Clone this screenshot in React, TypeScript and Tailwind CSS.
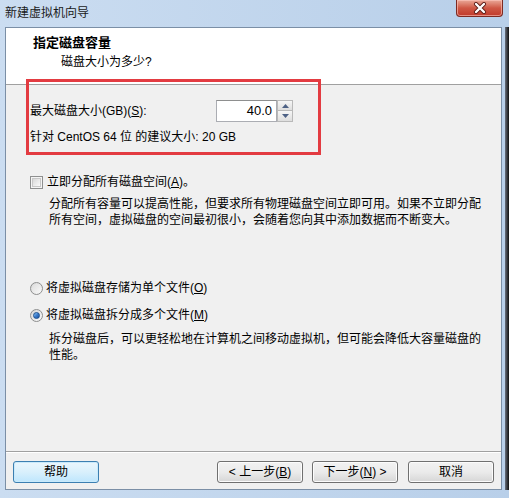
import React from "react";

function Checkbox() {
  return (
    <div className="flex h-[13px] w-[13px] items-center justify-center border border-[#8e8f8f] bg-[#f4f4f4]">
      <div className="h-[9px] w-[9px] border border-[#c8c8c8] bg-gradient-to-br from-[#d8d8d8] to-[#fafafa]" />
    </div>
  );
}

function Radio({ checked }: { checked?: boolean }) {
  return (
    <div className="flex h-[13px] w-[13px] items-center justify-center rounded-full border border-[#8e8f8f] bg-gradient-to-br from-[#d6d6d6] to-[#fbfbfb]">
      {checked ? (
        <div className="h-[7px] w-[7px] rounded-full border border-[#1b4f8f] bg-gradient-to-br from-[#8fc8f4] via-[#3a7ccd] to-[#1d4f9a]" />
      ) : (
        <div className="h-[9px] w-[9px] rounded-full bg-gradient-to-br from-[#dedede] to-[#f8f8f8]" />
      )}
    </div>
  );
}

function Btn({ children, primary }: { children: React.ReactNode; primary?: boolean }) {
  return (
    <div
      className={
        primary
          ? "flex h-[22px] w-[86px] items-center justify-center rounded-[3px] border border-[#3c7fb1] bg-gradient-to-b from-[#eaf6fd] via-[#d9f0fc] to-[#bee6fd] shadow-[inset_0_0_0_1px_#c9eafb]"
          : "flex h-[22px] w-[86px] items-center justify-center rounded-[3px] border border-[#707070] bg-gradient-to-b from-[#f2f2f2] via-[#ebebeb] to-[#d6d6d6] shadow-[inset_0_0_0_1px_#fcfcfc]"
      }
    >
      <span className="leading-[16px]">{children}</span>
    </div>
  );
}

export default function App() {
  return (
    <div className="relative h-[498px] w-[509px] overflow-hidden bg-gradient-to-r from-[#cbddf1] to-[#b8cfe9] font-['Liberation_Sans','Noto_Sans_CJK_SC',sans-serif] text-[12px] text-black">
      {/* Title bar */}
      <div className="flex h-[27px] items-start">
        <div className="pl-[5px] pt-[5px] leading-[16px] text-[#1a1a1a]">新建虚拟机向导</div>
        <div className="ml-auto mr-[6px] flex h-[17px] w-[47px] items-center justify-center rounded-b-[4px] border border-t-0 border-[#7d2a22] bg-gradient-to-b from-[#e9a898] via-[#cf5744] to-[#c0392b] shadow-[inset_0_0_0_1px_rgba(255,200,190,0.6)]">
          <svg width="14" height="12" viewBox="0 0 14 12">
            <path d="M3 2 L11 10 M11 2 L3 10" stroke="#5a1a14" strokeWidth="4" strokeLinecap="round" />
            <path d="M3 2 L11 10 M11 2 L3 10" stroke="#ffffff" strokeWidth="2.4" strokeLinecap="round" />
          </svg>
        </div>
      </div>

      {/* Body row */}
      <div className="flex h-[463px]">
        <div className="w-[5px]" />
        <div className="flex w-[497px] flex-col border border-[#7b8fa6] bg-[#f0f0f0]">
          {/* Header */}
          <div className="h-[57px] border-b border-[#a0a0a0] bg-white pl-[27px] pt-[7px]">
            <div className="text-[13px] font-bold leading-[16px]">指定磁盘容量</div>
            <div className="mt-[3px] pl-[28px] leading-[16px]">磁盘大小为多少?</div>
          </div>

          {/* Content */}
          <div className="flex-1 pl-[24px]">
            <div className="mt-[15px] flex h-[22px] items-center">
              <div className="w-[186px] leading-[16px]">
                最大磁盘大小(GB)(<span className="underline">S</span>):
              </div>
              <div className="flex h-[22px]">
                <div className="flex h-[22px] w-[61px] items-center justify-end border border-[#abadb3] border-t-[#8e8f8f] bg-white pr-[4px] text-[13px] leading-[16px]">
                  40.0
                </div>
                <div className="flex w-[16px] flex-col">
                  <div className="flex h-[11px] items-center justify-center border border-[#b9b9b9] bg-gradient-to-b from-[#f6f6f6] to-[#dedede]">
                    <svg width="7" height="4" viewBox="0 0 7 4"><path d="M0 4 L3.5 0 L7 4 Z" fill="#4d6185" /></svg>
                  </div>
                  <div className="flex h-[11px] items-center justify-center border border-t-0 border-[#b9b9b9] bg-gradient-to-b from-[#f6f6f6] to-[#dedede]">
                    <svg width="7" height="4" viewBox="0 0 7 4"><path d="M0 0 L3.5 4 L7 0 Z" fill="#4d6185" /></svg>
                  </div>
                </div>
              </div>
            </div>
            <div className="mt-[7px] leading-[16px]">针对 CentOS 64 位 的建议大小: 20 GB</div>

            <div className="mt-[29px] flex h-[16px] items-center">
              <Checkbox />
              <div className="ml-[4px] leading-[16px]">
                立即分配所有磁盘空间(<span className="underline">A</span>)。
              </div>
            </div>
            <div className="ml-[19px] mt-[6px] leading-[16px]">
              分配所有容量可以提高性能，但要求所有物理磁盘空间立即可用。如果不立即分配
              <br />
              所有空间，虚拟磁盘的空间最初很小，会随着您向其中添加数据而不断变大。
            </div>

            <div className="mt-[52px] flex h-[16px] items-center">
              <Radio />
              <div className="ml-[3px] leading-[16px]">
                将虚拟磁盘存储为单个文件(<span className="underline">O</span>)
              </div>
            </div>
            <div className="mt-[11px] flex h-[16px] items-center">
              <Radio checked />
              <div className="ml-[3px] leading-[16px]">
                将虚拟磁盘拆分成多个文件(<span className="underline">M</span>)
              </div>
            </div>
            <div className="ml-[19px] mt-[8px] leading-[16px]">
              拆分磁盘后，可以更轻松地在计算机之间移动虚拟机，但可能会降低大容量磁盘的
              <br />
              性能。
            </div>
          </div>

          {/* Footer */}
          <div className="flex h-[38px] items-start border-t border-[#a0a0a0] px-[7px] pt-[9px] shadow-[inset_0_1px_0_#ffffff]">
            <Btn primary>帮助</Btn>
            <div className="ml-auto flex gap-[9px]">
              <Btn>
                &lt; 上一步(<span className="underline">B</span>)
              </Btn>
              <Btn>
                下一步(<span className="underline">N</span>) &gt;
              </Btn>
              <div className="ml-[1px]">
                <Btn>取消</Btn>
              </div>
            </div>
          </div>
        </div>
        <div className="w-[3px]" />
        <div className="w-[4px] bg-gradient-to-r from-[#6b7280] to-[#111111]" />
      </div>

      {/* Red annotation box */}
      <div className="absolute left-[26px] top-[79px] h-[76px] w-[295px] border-[3px] border-[#e33b41]" />
    </div>
  );
}
